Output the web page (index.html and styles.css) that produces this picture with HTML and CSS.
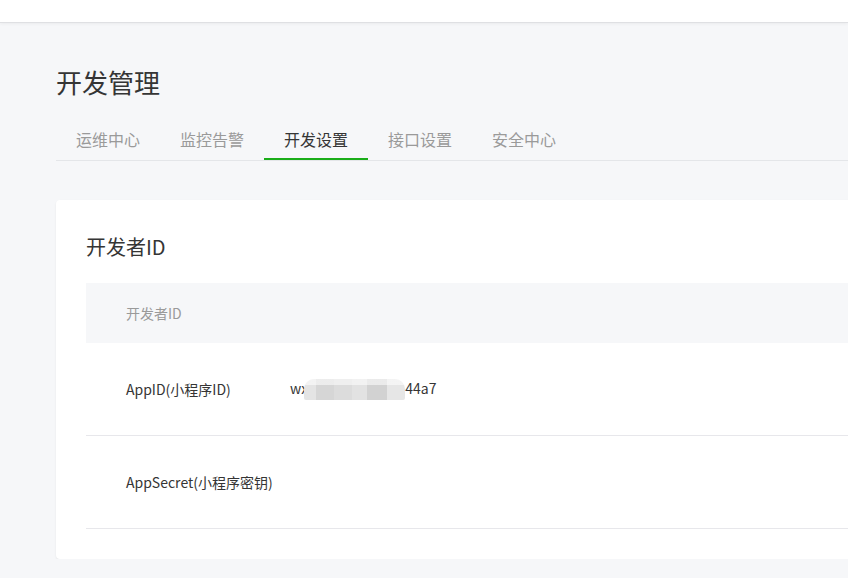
FILE: index.html
```html
<!DOCTYPE html>
<html lang="zh-CN">
<head>
  <meta charset="UTF-8" />
  <title>开发管理</title>
  <link rel="stylesheet" href="styles.css">
</head>
<body>

<div class="topbar"></div>

<div class="main">
  <h1 class="page-title">开发管理</h1>

  <div class="tabs">
    <a class="tab">运维中心</a>
    <a class="tab">监控告警</a>
    <a class="tab active">开发设置</a>
    <a class="tab">接口设置</a>
    <a class="tab">安全中心</a>
  </div>

  <div class="card">
    <h2 class="card-title">开发者ID</h2>
    <table class="info-table">
      <thead>
        <tr><th colspan="2">开发者ID</th></tr>
      </thead>
      <tbody>
        <tr>
          <td class="label">AppID(小程序ID)</td>
          <td>wx<span class="mosaic"></span>44a7</td>
        </tr>
        <tr>
          <td class="label">AppSecret(小程序密钥)</td>
          <td></td>
        </tr>
      </tbody>
    </table>
  </div>
</div>

</body>
</html>
```

FILE: styles.css
```css
html, body { overflow: hidden; }
body { margin: 0; background: #f6f7f9; color: #353535; font-family: "Noto Sans CJK SC", "Liberation Sans", sans-serif; }

.topbar { height: 22px; background: #fff; border-bottom: 1px solid #dfe0e3; box-shadow: 0 1px 3px rgba(0,0,0,0.05); }

.main { width: 1200px; padding-left: 56px; }
.page-title { margin: 41px 0 0; font-size: 26px; line-height: 36px; font-weight: normal; color: #353535; }

.tabs { display: flex; margin-top: 20px; border-bottom: 1px solid #e4e6e9; }
.tab { padding: 0 20px; height: 38px; line-height: 38px; font-size: 16px; color: #9a9a9a; border-bottom: 2px solid transparent; cursor: pointer; }
.tab.active { color: #353535; border-bottom-color: #1aad19; }

.card { margin-top: 39px; background: #fff; border-radius: 4px; padding: 33px 0 30px 30px; box-shadow: 0 1px 2px rgba(0,0,0,0.08); }
.card-title { margin: 0 0 22px; font-size: 20px; line-height: 28px; font-weight: normal; color: #353535; }

.info-table { width: 100%; border-collapse: collapse; font-size: 14px; }
.info-table th { height: 60px; padding: 0 0 0 40px; text-align: left; font-weight: normal; color: #9a9a9a; background: #f6f7f9; }
.info-table td { height: 92px; padding: 0; border-bottom: 1px solid #e7e7eb; color: #353535; }
.info-table td.label { width: 164px; padding-left: 40px; }

.mosaic { display: inline-block; width: 101px; height: 21px; margin-left: -4px; vertical-align: -6px; border-radius: 10px 10px 2px 2px;
  background:
    linear-gradient(to bottom, rgba(255,255,255,0.55) 0 30%, rgba(255,255,255,0) 30%),
    linear-gradient(to right, #e4e4e4 0 12%, #d6d6d6 12% 30%, #dcdcdc 30% 48%, #e2e2e2 48% 62%, #d2d2d2 62% 82%, #e6e6e6 82%); }
```
